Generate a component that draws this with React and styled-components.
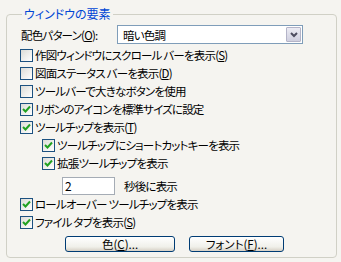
import React from "react";
import styled, { createGlobalStyle } from "styled-components";

const GlobalStyle = createGlobalStyle`
  html, body {
    margin: 0;
    padding: 0;
    background: #f5f4f0;
  }
  body {
    width: 341px;
    height: 262px;
    overflow: hidden;
    font-family: "Noto Sans CJK JP", "Noto Sans", sans-serif;
    font-size: 11.5px;
    letter-spacing: -0.8px;
    font-feature-settings: "palt";
    color: #000;
  }
`;

const Page = styled.div`
  padding: 7px 4px 0 6px;
`;

const Group = styled.fieldset`
  margin: 0;
  width: 331px;
  height: 251px;
  box-sizing: border-box;
  border: 1px solid #d0d0c6;
  border-radius: 4px;
  padding: 4px 0 0 13px;
`;

const Legend = styled.legend`
  margin-left: 2px;
  padding: 0 2px;
  line-height: 14px;
  color: #0046d5;
  font-size: 12px;
  letter-spacing: 0;
`;

const SchemeRow = styled.div`
  display: flex;
  align-items: center;
  height: 19px;
  margin-bottom: 2px;
`;

const SchemeLabel = styled.span`
  width: 96px;
  padding-left: 1px;
`;

const Select = styled.div`
  width: 186px;
  height: 19px;
  box-sizing: border-box;
  border: 1px solid #7f9db9;
  background: #fff;
  display: flex;
  align-items: center;
  padding: 1px;
`;

const SelectText = styled.span`
  flex: 1;
  padding-left: 4px;
`;

const DropButton = styled.span`
  width: 15px;
  height: 15px;
  box-sizing: border-box;
  border: 1px solid #b4b4c8;
  border-radius: 1px;
  background: linear-gradient(#ececf4, #cfcfdf);
  display: flex;
  align-items: center;
  justify-content: center;
`;

const Row = styled.label`
  display: flex;
  align-items: center;
  height: 18px;
  margin-left: ${p => (p.indent ? 22 : 0)}px;
  white-space: pre;
`;

const Box = styled.span`
  width: 13px;
  height: 13px;
  box-sizing: border-box;
  border: 1px solid #1c5180;
  background: linear-gradient(135deg, #dcdcd7, #fff);
  margin-right: 2px;
  display: flex;
  align-items: center;
  justify-content: center;
  flex: none;
`;

const SpinRow = styled.div`
  display: flex;
  align-items: center;
  padding: 5px 0 0 42px;
  height: 18px;
`;

const SpinBox = styled.span`
  width: 53px;
  height: 18px;
  box-sizing: border-box;
  border: 1px solid #a5acb5;
  background: #fff;
  padding-left: 2px;
  line-height: 16px;
  margin-right: 9px;
  font-size: 12px;
`;

const ButtonRow = styled.div`
  display: flex;
  gap: 14px;
  margin: 5px 0 0 45px;
`;

const Button = styled.button`
  width: ${p => p.w}px;
  height: 16px;
  box-sizing: border-box;
  padding: 0;
  border: 1px solid #003c74;
  border-radius: 3px;
  background: linear-gradient(#ffffff, #f0f0ea 70%, #d6d0c5);
  font: inherit;
  line-height: 14px;
  color: #000;
`;

const Check = () => (
  <svg width="9" height="9" viewBox="0 0 9 9">
    <path d="M1 4 L3.5 6.5 L8 1.5" stroke="#21a121" strokeWidth="2" fill="none" />
  </svg>
);

const Option = ({ checked, indent, children }) => (
  <Row indent={indent}>
    <Box>{checked && <Check />}</Box>
    <span>{children}</span>
  </Row>
);

export default function App() {
  return (
    <Page>
      <GlobalStyle />
      <Group>
        <Legend>ウィンドウの要素</Legend>
        <SchemeRow>
          <SchemeLabel>
            配色パターン(<u>O</u>):
          </SchemeLabel>
          <Select>
            <SelectText>暗い色調</SelectText>
            <DropButton>
              <svg width="8" height="6" viewBox="0 0 8 6">
                <path d="M1 1 L4 4 L7 1" stroke="#4d4d60" strokeWidth="2" fill="none" />
              </svg>
            </DropButton>
          </Select>
        </SchemeRow>
        <Option>
          作図ウィンドウにスクロール バーを表示(<u>S</u>)
        </Option>
        <Option>
          図面ステータス バーを表示(<u>D</u>)
        </Option>
        <Option>ツールバーで大きなボタンを使用</Option>
        <Option checked>リボンのアイコンを標準サイズに設定</Option>
        <Option checked>
          ツールチップを表示(<u>T</u>)
        </Option>
        <Option checked indent>
          ツールチップにショートカットキーを表示
        </Option>
        <Option checked indent>
          拡張ツールチップを表示
        </Option>
        <SpinRow>
          <SpinBox>2</SpinBox>
          <span>秒後に表示</span>
        </SpinRow>
        <Option checked>ロールオーバー ツールチップを表示</Option>
        <Option checked>
          ファイル タブを表示(<u>S</u>)
        </Option>
        <ButtonRow>
          <Button w={110}>
            色(<u>C</u>)...
          </Button>
          <Button w={95}>
            フォント(<u>F</u>)...
          </Button>
        </ButtonRow>
      </Group>
    </Page>
  );
}
